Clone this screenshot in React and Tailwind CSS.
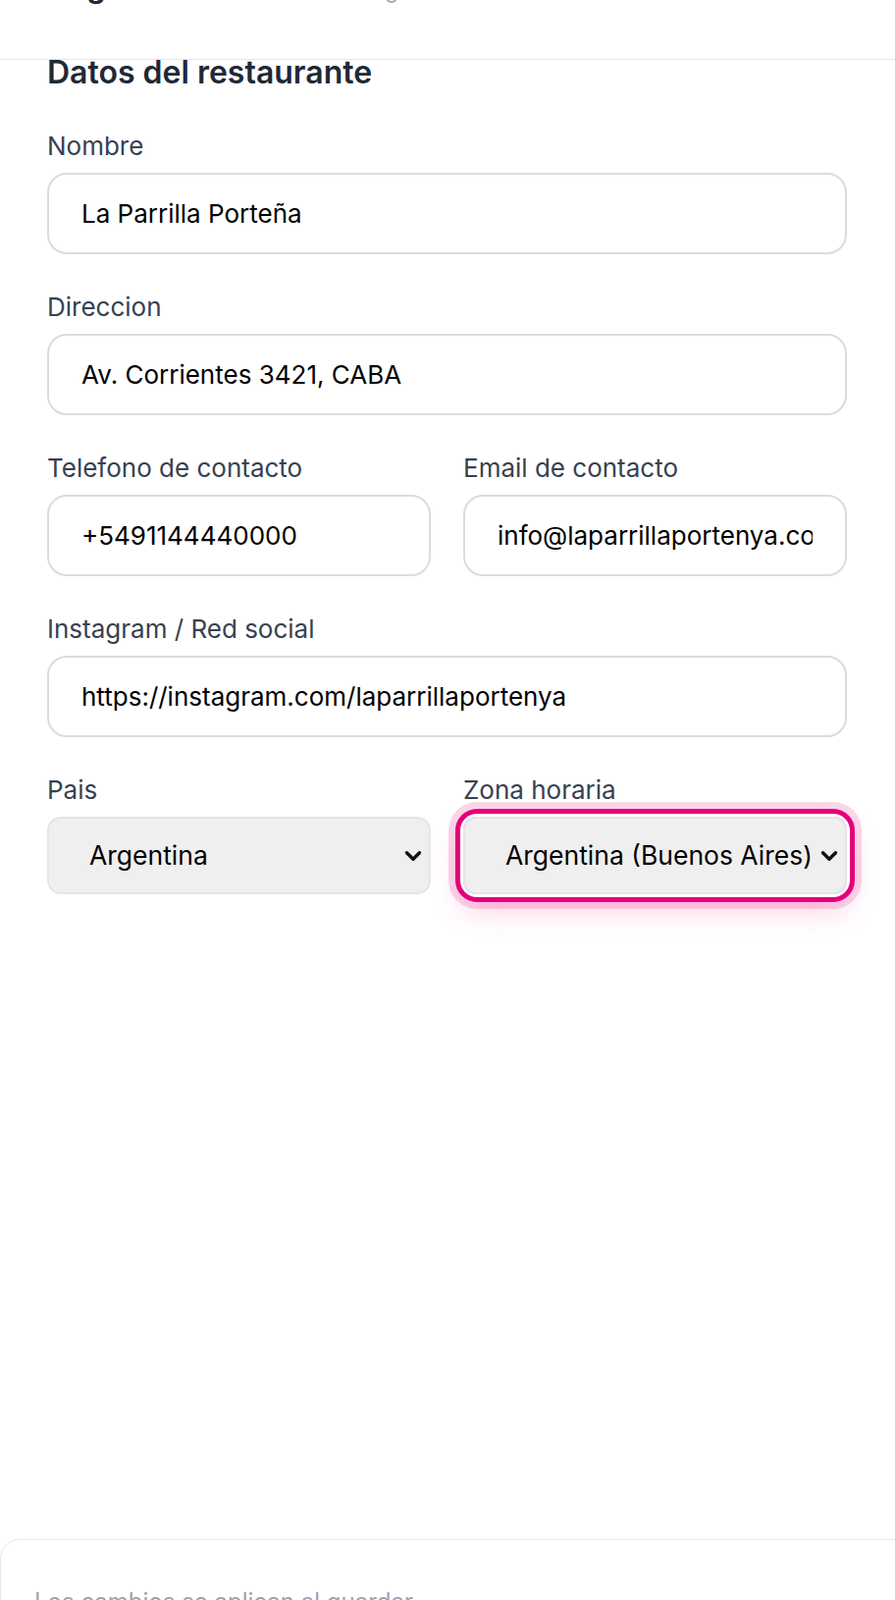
import React from "react";

function Chevron() {
  return (
    <svg
      viewBox="0 0 18 12"
      className="pointer-events-none absolute right-[9px] top-1/2 h-[12px] w-[18px] -translate-y-1/2"
      fill="none"
      stroke="#111"
      strokeWidth="3.4"
      strokeLinecap="round"
      strokeLinejoin="round"
    >
      <path d="M2.5 2.8 L9 9.2 L15.5 2.8" />
    </svg>
  );
}

function Field({ label, value }) {
  return (
    <div className="flex flex-col">
      <label className="mb-[11px] block text-[26px] leading-[32px] text-[#374151]">{label}</label>
      <input
        readOnly
        value={value}
        className="h-[83px] w-full rounded-[20px] border-2 border-[#d8dce2] bg-white px-[33px] text-[26px] text-black outline-none"
      />
    </div>
  );
}

function SelectField({ label, value, focused }) {
  return (
    <div className="flex flex-col">
      <label className="mb-[11px] block text-[26px] leading-[32px] text-[#374151]">{label}</label>
      <div
        className={
          focused
            ? "relative rounded-[14px] ring-[5px] ring-[#e4007c] ring-offset-[3px] ring-offset-white shadow-[0_0_0_15px_rgba(236,72,153,0.22),0_14px_30px_rgba(236,72,153,0.32)]"
            : "relative rounded-[14px]"
        }
      >
        <select
          value={value}
          onChange={() => {}}
          className="h-[79px] w-full appearance-none rounded-[14px] border-2 border-[#e3e5e9] bg-[#efefef] pl-[41px] pr-[30px] text-[26.5px] text-black outline-none"
        >
          <option value={value}>{value}</option>
        </select>
        <Chevron />
      </div>
    </div>
  );
}

export default function App() {
  return (
    <div className="min-h-[1630px] w-full overflow-hidden bg-white font-['Inter','Noto_Sans',sans-serif]">
      <header className="h-[61px] overflow-hidden border-b border-[#e5e7eb]">
        <div className="-mt-[31px] flex items-baseline whitespace-nowrap pl-[9px]">
          <span className="text-[30px] font-bold leading-[36px] text-[#1f2937]">Configuracion</span>
          <span className="ml-[44px] text-[22px] text-[#9ca3af]">Datos del negocio</span>
        </div>
      </header>

      <main className="px-12 pt-px">
        <h2 className="text-[32px] font-semibold leading-[24px] text-[#1f2937]">Datos del restaurante</h2>
        <div className="mt-[47px] flex w-[815px] flex-col gap-[38px]">
          <Field label="Nombre" value="La Parrilla Porteña" />
          <Field label="Direccion" value="Av. Corrientes 3421, CABA" />
          <div className="grid grid-cols-2 gap-x-[33px]">
            <Field label="Telefono de contacto" value="+5491144440000" />
            <Field label="Email de contacto" value="info@laparrillaportenya.com" />
          </div>
          <Field label="Instagram / Red social" value="https://instagram.com/laparrillaportenya" />
          <div className="grid grid-cols-2 gap-x-[33px]">
            <SelectField label="Pais" value="Argentina" />
            <SelectField label="Zona horaria" value="Argentina (Buenos Aires)" focused />
          </div>
        </div>
      </main>

      <footer className="mr-[-24px] mt-[657px] rounded-t-[20px] border border-[#e5e7eb] bg-white pb-8 pl-[34px] pt-[47px]">
        <p className="text-[24px] leading-[32px] text-[#9ca3af]">Los cambios se aplican al guardar</p>
      </footer>
    </div>
  );
}
